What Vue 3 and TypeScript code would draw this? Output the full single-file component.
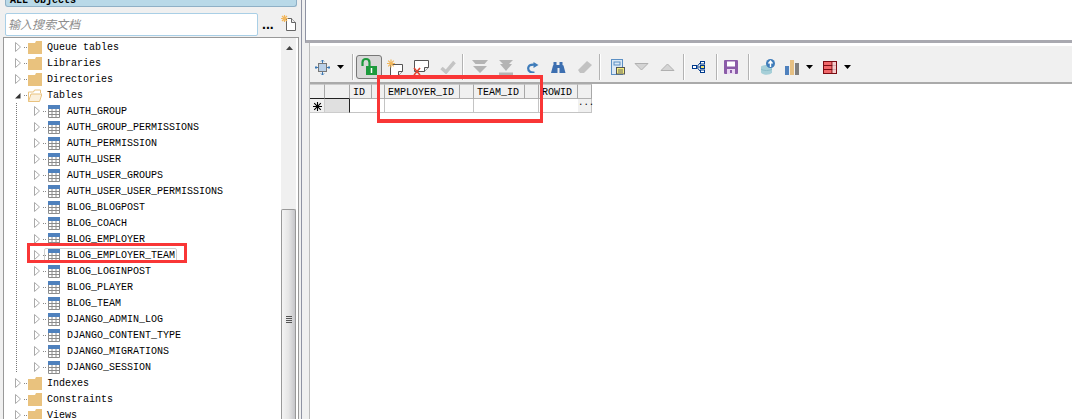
<script setup lang="ts">
interface TreeRow { name: string; level: 0 | 1; open?: boolean; hover?: boolean }
const folder = (name: string, open = false): TreeRow => ({ name, level: 0, open });
const table = (name: string, hover = false): TreeRow => ({ name, level: 1, hover });
const rows: TreeRow[] = [
  folder('Queue tables'), folder('Libraries'), folder('Directories'), folder('Tables', true),
  table('AUTH_GROUP'), table('AUTH_GROUP_PERMISSIONS'), table('AUTH_PERMISSION'), table('AUTH_USER'),
  table('AUTH_USER_GROUPS'), table('AUTH_USER_USER_PERMISSIONS'), table('BLOG_BLOGPOST'), table('BLOG_COACH'),
  table('BLOG_EMPLOYER'), table('BLOG_EMPLOYER_TEAM', true), table('BLOG_LOGINPOST'), table('BLOG_PLAYER'),
  table('BLOG_TEAM'), table('DJANGO_ADMIN_LOG'), table('DJANGO_CONTENT_TYPE'), table('DJANGO_MIGRATIONS'),
  table('DJANGO_SESSION'), folder('Indexes'), folder('Constraints'), folder('Views'),
];
const headers = ['', '', 'ID', '', 'EMPLOYER_ID', '', 'TEAM_ID', '', 'ROWID', ''];
</script>

<template>
  <div class="app">
    <aside class="left">
      <div class="title">ALL Objects</div>
      <div class="search-row">
        <div class="search">输入搜索文档</div>
        <span class="dots">...</span>
        <svg class="doc" width="16" height="17" viewBox="0 0 16 17">
          <path d="M5.500 4.500h5l4 4v8h-9z" fill="#fff" stroke="#666" />
          <path d="M10.500 4.500v4h4" fill="#eee" stroke="#666" />
          <path d="M3.500 1v7M0 4.500h7M1 2l5 5M6 2l-5 5" stroke="#f2b75c" stroke-width="1.200" />
        </svg>
      </div>
      <div class="tree">
        <div class="rows">
          <div v-for="r in rows" :key="r.name" class="row" :class="[r.level ? 'lv1' : 'lv0', { hover: r.hover }]">
            <svg class="tri" width="6" height="10" viewBox="0 0 6 10">
              <path v-if="r.open" d="M0 8.500L5.500 3v5.500z" fill="#333" />
              <path v-else d="M.5 .5L5.500 5 .5 9.500z" fill="#fff" stroke="#aaa" />
            </svg>
            <span class="conn"></span>
            <svg v-if="r.level" class="ico" width="14" height="13" viewBox="0 0 14 13">
              <rect x="1" y="0" width="12" height="4" fill="#4f81bd" />
              <path d="M1.500 4v8.500h11V4M1 6.500h12M1 9.500h12M5 4v9M9 4v9" fill="#fff" stroke="#8c8c8c" />
            </svg>
            <svg v-else-if="r.open" class="ico" width="14" height="13" viewBox="0 0 14 13">
              <path d="M.5 12.500V3h5l1-2h6v3" fill="#fff" stroke="#e9c27e" />
              <path d="M.5 12.500L3 5h11l-2.500 7.500z" fill="#fbf0dc" stroke="#e9c27e" />
            </svg>
            <svg v-else class="ico" width="14" height="13" viewBox="0 0 14 13">
              <path d="M0 13V2h7l1-2h6v13z" fill="#e9c27e" />
            </svg>
            <span class="name">{{ r.name }}</span>
          </div>
        </div>
        <div class="scroll">
          <svg class="up" width="7" height="4" viewBox="0 0 7 4"><path d="M0 4L3.500 0 7 4z" fill="#444" /></svg>
          <div class="thumb">
            <span class="grip"></span><span class="grip"></span><span class="grip"></span><span class="grip"></span>
          </div>
        </div>
      </div>
    </aside>

    <main class="right">
      <div class="top-pane"></div>
      <div class="lower">
        <div class="toolbar">
          <svg class="g5" width="15" height="15" viewBox="0 0 15 15">
            <rect x="3.500" y="3.500" width="8" height="8" fill="#b9d0e8" stroke="#777" />
            <path d="M7.500 0v3M7.500 12v3M0 7.500h3M12 7.500h3" stroke="#3b78b5" />
            <path d="M6 1.500L7.500 0 9 1.500M6 13.500L7.500 15 9 13.500M1.500 6L0 7.500 1.500 9M13.500 6L15 7.500 13.500 9" fill="none" stroke="#3b78b5" />
          </svg>
          <svg class="g7" width="7" height="4" viewBox="0 0 7 4"><path d="M0 0h7L3.500 4z" /></svg>
          <span class="sep g8"></span>
          <div class="lock g2">
            <svg width="24" height="22" viewBox="0 0 24 22">
              <path d="M5.500 10V6.500Q5.500 3 9 3t3.500 3.500V10" fill="none" stroke="#1c9a3c" stroke-width="2.200" />
              <rect x="9" y="10" width="11" height="9" fill="#1c9a3c" />
              <path d="M14.500 12v5" stroke="#fff" stroke-width="1.500" />
            </svg>
          </div>
          <svg class="g5" width="16" height="17" viewBox="0 0 16 17">
            <path d="M3.500 5.500h12v7l-4 4h-8z" fill="#fff" stroke="#555" />
            <path d="M11.500 16.500v-4h4" fill="#eee" stroke="#555" />
            <path d="M4 .5v8M0 4.500h8M1.200 1.700l5.600 5.600M6.800 1.700l-5.600 5.600" stroke="#f2b75c" stroke-width="1.200" />
          </svg>
          <svg class="g10" width="16" height="17" viewBox="0 0 16 17">
            <path d="M1.500 1.500h14v7l-4 4h-10z" fill="#fff" stroke="#555" />
            <path d="M11.500 12.500v-4h4" fill="#eee" stroke="#555" />
            <path d="M1 9l6 7M7 9l-6 7" stroke="#e0442f" stroke-width="1.600" />
          </svg>
          <svg class="g11" width="16" height="14" viewBox="0 0 16 14">
            <path d="M1.500 8l4.500 4L14.500 2" fill="none" stroke="#c4c4c4" stroke-width="3.500" />
          </svg>
          <span class="sep g6"></span>
          <svg class="g8" width="16" height="14" viewBox="0 0 16 14">
            <path d="M0 0h16l-3.500 4H3.500zM1 6h14l-7 7z" fill="#b4b4b4" />
          </svg>
          <svg class="g10" width="16" height="15" viewBox="0 0 16 15">
            <path d="M1 0h14l-4 4H5zM2 4h12l-6 7zM1 12.500h14V15H1z" fill="#b4b4b4" />
          </svg>
          <svg class="g13" width="12" height="11" viewBox="0 0 12 11">
            <path d="M7.500 10.500C3 11 1 8.500 1.200 6 1.500 3.500 4 2.500 7 2.600" fill="none" stroke="#3f7cba" stroke-width="2.200" />
            <path d="M6.500 0L11.500 3 6.500 6z" fill="#3f7cba" />
          </svg>
          <svg class="g12" width="15" height="11" viewBox="0 0 15 11">
            <path d="M2.500 0h3v3h3V0h3v3l1 .5 2 7.500H8.500V6h-2v5H0l2-7.500 .5-.5z" fill="#3d6fb0" />
          </svg>
          <svg class="g11" width="15" height="14" viewBox="0 0 15 14">
            <path d="M10 1l5 4-8 8H3L1 10z" fill="#c2c2c2" />
          </svg>
          <span class="sep g7"></span>
          <svg class="g10" width="14" height="16" viewBox="0 0 14 16">
            <rect x=".5" y=".5" width="11" height="15" fill="#dbe8f5" stroke="#5b8fc4" />
            <rect x="3" y="3" width="6" height="3" fill="none" stroke="#5b8fc4" />
            <rect x="5.500" y="8.500" width="8" height="6.500" fill="#f7ef7a" stroke="#555" />
            <path d="M7 11h5M7 13h5" stroke="#666" />
          </svg>
          <svg class="g9" width="15" height="8" viewBox="0 0 15 8">
            <path d="M1 .5h13L7.500 7z" fill="#d4d4d4" stroke="#b0b0b0" />
          </svg>
          <svg class="g11" width="15" height="8" viewBox="0 0 15 8">
            <path d="M1 7.500h13L7.500 1z" fill="#d4d4d4" stroke="#b0b0b0" />
          </svg>
          <span class="sep g8"></span>
          <svg class="g7" width="13" height="12" viewBox="0 0 13 12">
            <rect x=".5" y="4.500" width="4" height="3" fill="#fff" stroke="#003a8c" />
            <rect x="8.500" y=".5" width="4" height="2.500" fill="#fff" stroke="#003a8c" />
            <rect x="8.500" y="4.500" width="4" height="3" fill="#f2e36b" stroke="#003a8c" />
            <rect x="8.500" y="9" width="4" height="2.500" fill="#fff" stroke="#003a8c" />
            <path d="M5 6h3M5 5.500L8 2M5 6.500L8 10" stroke="#003a8c" fill="none" />
          </svg>
          <span class="sep g11"></span>
          <svg class="g6" width="14" height="14" viewBox="0 0 14 14">
            <rect width="14" height="14" rx="1" fill="#8b5ca8" />
            <rect x="3" y="1.500" width="8" height="5" fill="#fff" />
            <rect x="3" y="9" width="8" height="5" fill="#ead9f2" />
            <rect x="6" y="10" width="2" height="3" fill="#8b5ca8" />
          </svg>
          <span class="sep g10"></span>
          <svg class="g11" width="14" height="16" viewBox="0 0 14 16">
            <path d="M0 7.500c2-2 9-2 11 0v6c-2 3-9 3-11 0z" fill="#a6cfd8" />
            <path d="M0 10c2 2 9 2 11 0" fill="none" stroke="#8bbdc9" />
            <circle cx="9.500" cy="4.500" r="4.500" fill="#3f7cba" />
            <path d="M9.500 8V2M7.500 4.500l2-2.500 2 2.500" fill="none" stroke="#fff" stroke-width="1.400" />
          </svg>
          <svg class="g10" width="14" height="15" viewBox="0 0 14 15">
            <rect x="0" y="6" width="4" height="9" fill="#4f81bd" />
            <rect x="5" y="0" width="4" height="15" fill="#e6c083" />
            <rect x="10" y="3" width="4" height="12" fill="#7f7f7f" />
          </svg>
          <svg class="g7" width="7" height="4" viewBox="0 0 7 4"><path d="M0 0h7L3.500 4z" /></svg>
          <svg class="g10" width="14" height="13" viewBox="0 0 14 13">
            <rect x=".5" y=".5" width="13" height="12" fill="#f0686a" stroke="#7a0c12" />
            <path d="M1 4.500h12M1 8.500h12M9 1v11" stroke="#7a0c12" />
            <path d="M9.500 1h3.500v11H9.500z" fill="#f6f6f6" opacity=".7" />
          </svg>
          <svg class="g7" width="7" height="4" viewBox="0 0 7 4"><path d="M0 0h7L3.500 4z" /></svg>
        </div>
        <div class="grid">
          <div class="head">
            <div v-for="(h, i) in headers" :key="i" class="hcell">{{ h }}</div>
          </div>
          <div class="data">
            <div class="star">
              <svg width="9" height="9" viewBox="0 0 9 9">
                <path d="M4.500 0v9M0 4.500h9M1.200 1.200l6.600 6.600M7.800 1.200L1.200 7.800" stroke="#000" stroke-width="1.100" />
              </svg>
            </div>
            <div class="ind"></div>
            <div class="cell c-id"></div>
            <div class="cell c-emp"></div>
            <div class="cell c-team"></div>
            <div class="cell c-row"><span class="more">...</span></div>
          </div>
        </div>
      </div>
    </main>

    <div class="mark mark-tree"></div>
    <div class="mark mark-grid"></div>
  </div>
</template>

<style>
html, body { margin: 0; background: #fff; }
</style>

<style scoped>
.app {
  position: relative;
  display: flex;
  width: 1072px;
  height: 419px;
  overflow: hidden;
  background: #f0f0f0;
  font-family: "Liberation Mono", monospace;
  font-size: 10px;
  color: #000;
}
.left {
  box-sizing: border-box;
  flex: none;
  width: 302px;
  padding-left: 3px;
  border-right: 1px solid #8f93a3;
  display: flex;
  flex-direction: column;
}
.title {
  box-sizing: border-box;
  flex: none;
  width: 292px;
  height: 7px;
  margin-left: 2px;
  padding-left: 4px;
  overflow: hidden;
  font-weight: bold;
  font-size: 10px;
  line-height: 1px;
  background: #b9d9e8;
  border: 1px solid #8fb0c6;
  border-top: 0;
  border-radius: 0 0 3px 3px;
}
.search-row {
  flex: none;
  display: flex;
  align-items: center;
  height: 24px;
  margin: 5px 0 1px 1px;
}
.search {
  box-sizing: border-box;
  width: 253px;
  height: 23px;
  margin-left: 1px;
  padding-left: 2px;
  border: 1px solid #a9cfe6;
  border-radius: 2px;
  background: #fff;
  font-family: "Noto Sans CJK SC", sans-serif;
  font-size: 12px;
  font-style: italic;
  line-height: 20px;
  color: #8d8d8d;
}
.dots {
  margin-left: 4px;
  width: 14px;
  font-family: "Liberation Sans", sans-serif;
  font-size: 14px;
  font-weight: bold;
  line-height: 20px;
}
.doc { margin-left: 5px; margin-top: -4px; }
.tree {
  position: relative;
  flex: 1;
  box-sizing: border-box;
  width: 296px;
  min-height: 0;
  display: flex;
  overflow: hidden;
  background: #fff;
  border: 1px solid #999;
  border-bottom: 0;
}
.tree::before {
  content: "";
  position: absolute;
  left: 12px;
  top: 65px;
  height: 269px;
  border-left: 1px dotted #777;
}
.rows {
  flex: 1;
  padding-top: 1px;
}
.row {
  position: relative;
  display: flex;
  align-items: center;
  height: 16px;
  white-space: nowrap;
}
.lv0 { padding-left: 11px; }
.lv1 { padding-left: 30px; }
.row.hover::before {
  content: "";
  position: absolute;
  left: 40px;
  top: 1px;
  width: 133px;
  height: 14px;
  border: 1px solid #cfcfcf;
  border-radius: 2px;
  box-sizing: border-box;
}
.tri { flex: none; position: relative; }
.conn {
  flex: none;
  width: 3px;
  margin: 0 1px 0 3px;
  border-top: 1px dotted #888;
}
.ico { flex: none; position: relative; margin-right: 5px; }
.lv1 .ico { margin-right: 6px; }
.name { position: relative; }
.scroll {
  flex: none;
  position: relative;
  width: 15px;
  margin-right: 2px;
  background: #f0f0f0;
}
.up {
  display: block;
  margin: 8px 0 0 5px;
}
.thumb {
  position: absolute;
  left: 0;
  right: 0;
  top: 171px;
  height: 240px;
  box-sizing: border-box;
  padding-top: 106px;
  border: 1px solid #999;
  border-bottom: 0;
  border-radius: 2px 2px 0 0;
  background: linear-gradient(90deg, #f4f4f4, #e6e6e6 50%, #c6c6ca);
}
.grip {
  display: block;
  width: 6px;
  height: 1px;
  margin: 0 auto 1px;
  background: #555;
}
.right {
  flex: 1;
  min-width: 0;
  display: flex;
  flex-direction: column;
  margin-left: 3px;
}
.top-pane {
  flex: none;
  height: 40px;
  background: #fff;
  border-left: 1px solid #8f93a3;
  border-bottom: 3px solid #a9a9b0;
}
.lower {
  flex: 1;
  background: #fff;
  margin-left: 4px;
  padding-top: 3px;
  border-left: 1px solid #bcbcbc;
  box-sizing: border-box;
}
.toolbar {
  box-sizing: border-box;
  display: flex;
  align-items: center;
  height: 38px;
  padding-top: 6px;
  background: #f0f0f0;
  border-bottom: 2px solid #aaa;
}
.toolbar svg { flex: none; }
.sep {
  flex: none;
  width: 2px;
  height: 26px;
  background: linear-gradient(90deg, #b3b3b3 50%, #fff 50%);
}
.lock {
  box-sizing: border-box;
  width: 26px;
  height: 24px;
  flex: none;
  border: 1px solid #777;
  border-radius: 3px;
  background: #d8d8d8;
}
.g2 { margin-left: 2px; }
.g5 { margin-left: 5px; }
.g6 { margin-left: 6px; }
.g7 { margin-left: 7px; }
.g8 { margin-left: 8px; }
.g9 { margin-left: 9px; }
.g10 { margin-left: 10px; }
.g11 { margin-left: 11px; }
.g12 { margin-left: 12px; }
.g13 { margin-left: 13px; }
.grid {
  width: 282px;
}
.head {
  display: grid;
  grid-template-columns: 15px 25px 22px 13px 75px 14px 51px 14px 39px 14px;
  height: 15px;
}
.hcell {
  box-sizing: border-box;
  height: 15px;
  padding: 1px 0 0 3px;
  background: #f0f0f0;
  border-top: 1px solid #ccc;
  border-right: 1px solid #a8a8a8;
  border-bottom: 1px solid #b0b0b0;
  line-height: 13px;
  overflow: hidden;
}
.hcell:nth-child(-n+2) { border-bottom-color: #222; }
.data {
  display: grid;
  grid-template-columns: 15px 25px 35px 89px 65px 53px;
  height: 14px;
}
.star {
  display: flex;
  align-items: center;
  justify-content: center;
  padding-top: 2px;
  background: #f0f0f0;
  border-right: 1px solid #ccc;
  border-bottom: 1px solid #ccc;
  box-sizing: border-box;
}
.ind {
  box-sizing: border-box;
  background: #e0e0e0;
  border-right: 1px solid #222;
  border-bottom: 1px solid #ccc;
}
.cell {
  box-sizing: border-box;
  position: relative;
  background: #fff;
  border-right: 1px solid #c4c4c4;
  border-bottom: 1px solid #c4c4c4;
}
.more {
  position: absolute;
  right: 0;
  top: 0;
  width: 13px;
  height: 13px;
  background: #f0f0f0;
  text-align: center;
  font-size: 9px;
  line-height: 9px;
}
.mark {
  position: absolute;
  box-sizing: border-box;
  border: 3px solid #f93636;
}
.mark-tree { left: 27px; top: 243px; width: 160px; height: 20px; }
.mark-grid { left: 377px; top: 75px; width: 166px; height: 48px; border-width: 4px 3px; }
</style>
